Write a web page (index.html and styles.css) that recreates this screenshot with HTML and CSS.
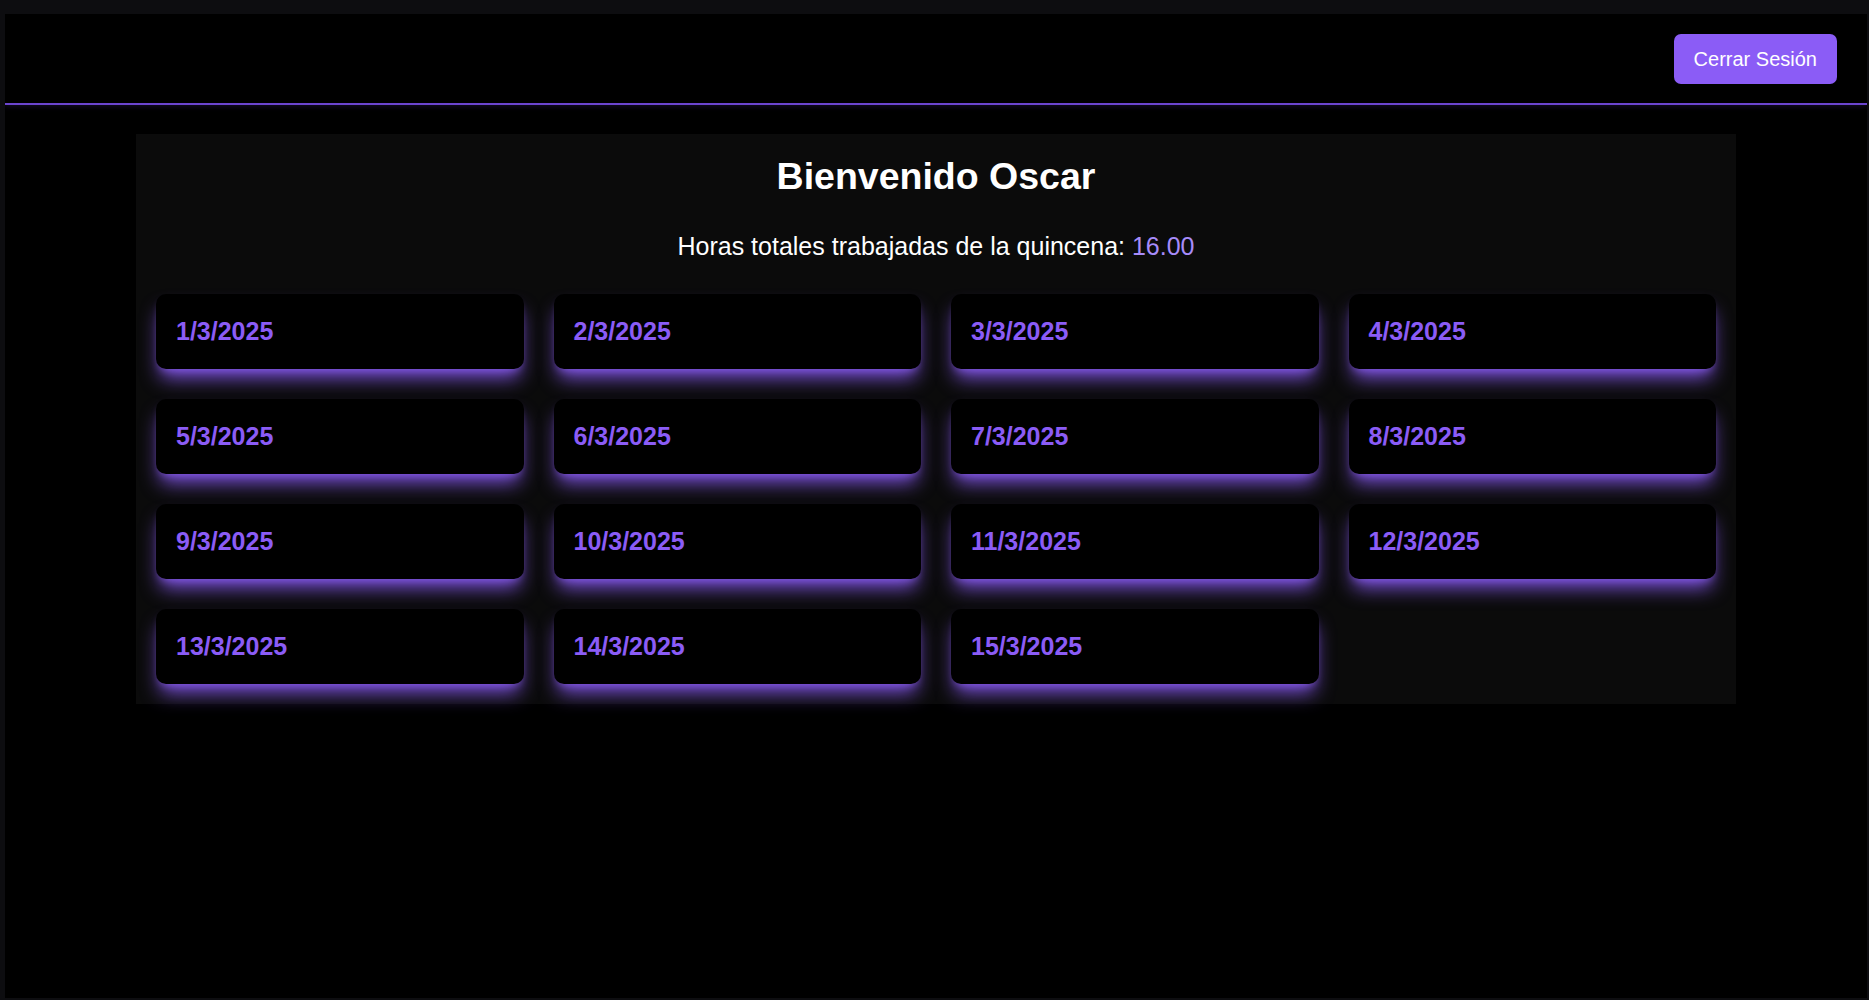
FILE: index.html
```html
<!DOCTYPE html>
<html lang="es">
<head>
<meta charset="utf-8">
<title>Horas</title>
<link rel="stylesheet" href="styles.css">
</head>
<body>
<div class="window">
  <header class="topbar">
    <button class="logout">Cerrar Sesión</button>
  </header>
  <main class="panel">
    <h1 class="title">Bienvenido Oscar</h1>
    <p class="total">Horas totales trabajadas de la quincena: <span class="hours">16.00</span></p>
    <div class="grid">
      <div class="day">1/3/2025</div>
      <div class="day">2/3/2025</div>
      <div class="day">3/3/2025</div>
      <div class="day">4/3/2025</div>
      <div class="day">5/3/2025</div>
      <div class="day">6/3/2025</div>
      <div class="day">7/3/2025</div>
      <div class="day">8/3/2025</div>
      <div class="day">9/3/2025</div>
      <div class="day">10/3/2025</div>
      <div class="day">11/3/2025</div>
      <div class="day">12/3/2025</div>
      <div class="day">13/3/2025</div>
      <div class="day">14/3/2025</div>
      <div class="day">15/3/2025</div>
    </div>
  </main>
</div>
</body>
</html>
```

FILE: styles.css
```css
* { box-sizing: border-box; }
html, body { margin: 0; padding: 0; }
body {
  background: #0d0d10;
  font-family: "Liberation Sans", Arial, sans-serif;
  height: 1000px;
  overflow: hidden;
  padding: 14px 2px 2px 5px;
}
.window {
  background: #000;
  height: 984px;
  overflow: hidden;
  color: #fff;
}
.topbar {
  display: flex;
  justify-content: flex-end;
  align-items: center;
  padding: 20px 30px 19px;
  border-bottom: 2px solid #6b45cf;
  box-shadow: 0 2px 5px rgba(110, 71, 212, 0.15);
}
.logout {
  background: #8b5cf6;
  color: #fff;
  border: none;
  border-radius: 7px;
  font-family: "Liberation Sans", Arial, sans-serif;
  font-size: 20px;
  line-height: 30px;
  padding: 10px 20px;
  white-space: nowrap;
}
.panel {
  max-width: 1600px;
  margin: 29px auto 0;
  padding: 20px;
  background: #0b0b0b;
}
.title {
  margin: 0 0 30px;
  text-align: center;
  font-size: 37.5px;
  line-height: 45px;
  font-weight: 700;
}
.total {
  margin: 0 0 30px;
  text-align: center;
  font-size: 25px;
  line-height: 35px;
}
.hours { color: #a78bfa; }
.grid {
  display: grid;
  grid-template-columns: repeat(4, 1fr);
  gap: 30px;
}
.day {
  background: #000;
  border-radius: 10px;
  padding: 20px;
  font-size: 25px;
  line-height: 35px;
  font-weight: 700;
  color: #8b5cf6;
  box-shadow: 0 13px 19px -4px rgba(139, 92, 246, 0.85), 0 5px 8px -5px rgba(139, 92, 246, 0.85);
}
```
